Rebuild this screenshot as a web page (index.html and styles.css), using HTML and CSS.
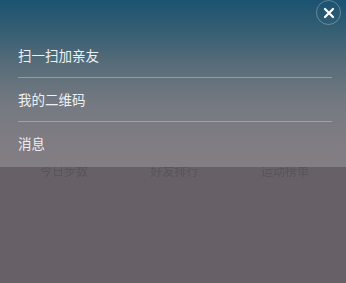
FILE: index.html
```html
<!DOCTYPE html>
<html>
<head>
<meta charset="utf-8">
<link rel="stylesheet" href="styles.css">
</head>
<body>
<div class="screen">
  <div class="under">
    <div class="tabs">
      <span>今日步数</span>
      <span>好友排行</span>
      <span>运动榜单</span>
    </div>
  </div>
  <div class="panel">
    <button class="close" aria-label="关闭">
      <svg width="12" height="12" viewBox="0 0 12 12"><path d="M2 2 L10 10 M10 2 L2 10" stroke="#ffffff" stroke-width="2.2" stroke-linecap="round"/></svg>
    </button>
    <ul class="menu">
      <li class="item">扫一扫加亲友</li>
      <li class="item">我的二维码</li>
      <li class="item">消息</li>
    </ul>
  </div>
</div>
</body>
</html>
```
FILE: styles.css
```css
html, body {
  margin: 0;
  padding: 0;
}
body {
  width: 346px;
  height: 283px;
  overflow: hidden;
  background: #676167;
  font-family: "Noto Sans CJK SC", "Noto Sans", sans-serif;
}
.screen {
  position: relative;
  width: 346px;
  height: 283px;
}
.under {
  padding-top: 163px;
}
.tabs {
  display: flex;
  justify-content: space-between;
  padding: 0 37px 0 40px;
  font-size: 12px;
  line-height: 16px;
  color: #595459;
  filter: blur(0.5px);
}
.panel {
  position: absolute;
  left: 0;
  top: 0;
  width: 346px;
  height: 167px;
  background: linear-gradient(to bottom, #1b5371 0%, #355e73 18%, #5a6d79 40%, #747981 62%, #807c83 85%, #837e84 100%);
}
.close {
  position: absolute;
  top: 0;
  right: 5px;
  width: 25px;
  height: 25px;
  border-radius: 50%;
  border: 1px solid rgba(255, 255, 255, 0.28);
  background: transparent;
  padding: 0;
  display: flex;
  align-items: center;
  justify-content: center;
}
.menu {
  list-style: none;
  margin: 0;
  padding: 34px 14px 0 18px;
}
.item {
  height: 43px;
  line-height: 43px;
  font-size: 13.5px;
  color: #eef0f2;
  border-bottom: 1px solid rgba(255, 255, 255, 0.3);
}
.item:last-child {
  border-bottom: none;
}
```
